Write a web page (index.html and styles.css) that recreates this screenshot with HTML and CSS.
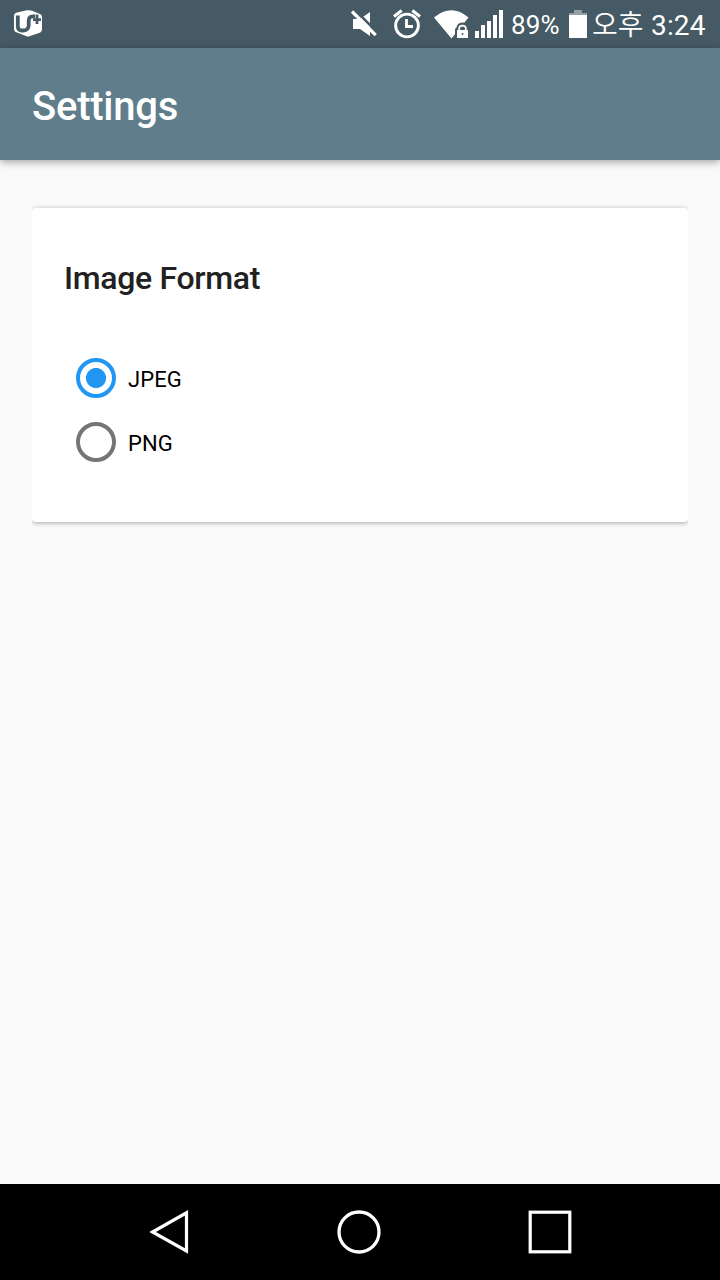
FILE: index.html
```html
<!DOCTYPE html>
<html lang="en">
<head>
<meta charset="utf-8">
<title>Settings</title>
<link rel="stylesheet" href="styles.css">
</head>
<body>
<div class="screen">
  <div class="status">
    <svg class="carrier" width="30" height="30" viewBox="0 0 30 30">
      <path d="M1 7Q1 4.500 4 3.600L14 1.300Q17 .8 19 1.800L27 5Q29 6 29 8V20Q29 23 26 24L17 27Q15 28 13 27L4 23.500Q1 22.500 1 20Z" fill="#fff"/>
      <path d="M4.800 6.500V17Q4.800 21.500 9 21.500H10.500Q15.500 21.300 15.700 16.500V11.500Q15.800 7.300 20 7.300H22" fill="none" stroke="#455a64" stroke-width="3.800"/>
      <path d="M24 5.500V15M20 10.600H28" stroke="#455a64" stroke-width="2.800"/>
    </svg>
    <svg class="mute" width="29" height="28" viewBox="0 0 29 28">
      <path d="M3 9H10L20 2V26L10 19H3Z" fill="#fff"/>
      <path d="M4.500 -.5L29 24" stroke="#455a64" stroke-width="2.600"/>
      <path d="M2 1.500L25.700 25.200" stroke="#fff" stroke-width="3.200"/>
    </svg>
    <svg class="alarm" width="28" height="30" viewBox="0 0 28 30">
      <circle cx="14" cy="16.500" r="11.400" fill="none" stroke="#fff" stroke-width="2.900"/>
      <path d="M1 7.500L8.700 1.500M27 7.500L19.300 1.500" stroke="#fff" stroke-width="3"/>
      <path d="M13.500 10V17.500H20" fill="none" stroke="#fff" stroke-width="2.800"/>
    </svg>
    <svg class="wifi" width="36" height="30" viewBox="0 0 36 30">
      <path d="M0 7.500Q17.500 -7 34.500 7.500L17.500 28.500Z" fill="#fff"/>
      <path d="M21 30V19Q22.500 18 23 16Q24 12.500 28.500 12.500T35.500 17V30Z" fill="#455a64"/>
      <path d="M23 20H34V28H23Z" fill="#fff"/>
      <path d="M25.200 20V18.300Q25.200 15.600 28.500 15.600T31.800 18.300V20" fill="none" stroke="#fff" stroke-width="1.800"/>
      <circle cx="28.500" cy="24" r="1" fill="#455a64"/>
    </svg>
    <svg class="signal" width="28" height="28" viewBox="0 0 28 28">
      <path d="M0 21H4V28H0ZM6 15H10V28H6ZM12 11H16V28H12ZM18 5H22V28H18ZM24 0H28V28H24Z" fill="#fff"/>
    </svg>
    <span class="percent">89%</span>
    <svg class="battery" width="18" height="28" viewBox="0 0 18 28">
      <path d="M5 0H13V3H18V5H0V3H5Z" fill="#949fa5"/>
      <path d="M0 5H18V28H0Z" fill="#fff"/>
    </svg>
    <span class="meridiem">오후</span>
    <span class="time">3:24</span>
  </div>
  <header class="toolbar"><h1 class="title">Settings</h1></header>
  <main class="content">
    <section class="card">
      <h2 class="heading">Image Format</h2>
      <div class="options">
        <label class="option"><input class="radio" type="radio" name="format" checked><span>JPEG</span></label>
        <label class="option"><input class="radio" type="radio" name="format"><span>PNG</span></label>
      </div>
    </section>
  </main>
  <nav class="navbar">
    <svg class="back" width="40" height="46" viewBox="0 0 40 46"><path d="M37.500 3.800V42L3.500 23Z" fill="none" stroke="#fff" stroke-width="3.200"/></svg>
    <svg class="home" width="46" height="46" viewBox="0 0 46 46"><circle cx="23" cy="23" r="20" fill="none" stroke="#fff" stroke-width="3.300"/></svg>
    <svg class="recent" width="46" height="46" viewBox="0 0 46 46"><rect x="3.200" y="3.200" width="39.600" height="39.600" fill="none" stroke="#fff" stroke-width="3.200"/></svg>
  </nav>
</div>
</body>
</html>
```

FILE: styles.css
```css
body {
  margin: 0;
  font-family: Roboto, "Noto Sans CJK KR", sans-serif;
}
.screen {
  display: flex;
  flex-direction: column;
  width: 720px;
  height: 1280px;
  overflow: hidden;
  background: #fafafa;
}
.status {
  display: flex;
  align-items: flex-start;
  flex: none;
  height: 48px;
  background: #455a64;
  color: #fff;
  white-space: nowrap;
}
.status svg { flex: none; }
.carrier { margin: 9px 0 0 13px; }
.mute { margin: 10px 0 0 307px; }
.alarm { margin: 9px 0 0 14px; }
.wifi { margin: 10px 0 0 13px; }
.signal { margin: 10px 0 0 5px; }
.percent {
  width: 58px;
  padding-left: 8px;
  box-sizing: border-box;
  font-size: 26px;
  line-height: 51px;
  letter-spacing: 0.15px;
}
.battery { margin: 10px 0 0 8px; }
.meridiem {
  width: 64px;
  padding-left: 5px;
  box-sizing: border-box;
  font-family: "Noto Sans CJK KR", sans-serif;
  font-weight: 350;
  font-size: 28px;
  line-height: 47px;
}
.time {
  font-size: 28px;
  line-height: 52px;
  letter-spacing: 0.15px;
}
.toolbar {
  display: flex;
  align-items: center;
  flex: none;
  height: 112px;
  padding: 0 32px;
  box-sizing: border-box;
  background: #607d8b;
  box-shadow: 0 2px 8px rgba(0, 0, 0, 0.36);
}
.title {
  margin: 5px 0 0;
  color: #fff;
  font-size: 40px;
  font-weight: 500;
  line-height: 48px;
  letter-spacing: -0.25px;
}
.content {
  flex: 1;
  padding: 48px 32px;
}
.card {
  height: 314px;
  padding: 50px 32px 0;
  box-sizing: border-box;
  border-radius: 4px;
  background: #fff;
  box-shadow: 0 1px 5px rgba(0, 0, 0, 0.34);
  clip-path: inset(-8px 0 -8px 0);
}
.heading {
  margin: 0;
  color: #212121;
  font-size: 32px;
  font-weight: 500;
  line-height: 40px;
  letter-spacing: -0.32px;
}
.options { padding: 48px 0 0 12px; }
.option {
  display: flex;
  align-items: center;
  gap: 12px;
  height: 64px;
  color: #000;
  font-size: 22px;
  letter-spacing: 0.1px;
}
.option span { padding-top: 3px; }
.radio {
  appearance: none;
  width: 40px;
  height: 40px;
  margin: 0;
  border: 4px solid #757575;
  border-radius: 50%;
}
.radio:checked {
  border-color: #2196f3;
  background: radial-gradient(circle, #2196f3 9.700px, transparent 10.300px);
}
.navbar {
  display: flex;
  align-items: flex-start;
  flex: none;
  height: 96px;
  padding: 25px 0 0 149px;
  box-sizing: border-box;
  background: #000;
}
.home { margin-left: 147px; }
.recent { margin-left: 145px; }
```
